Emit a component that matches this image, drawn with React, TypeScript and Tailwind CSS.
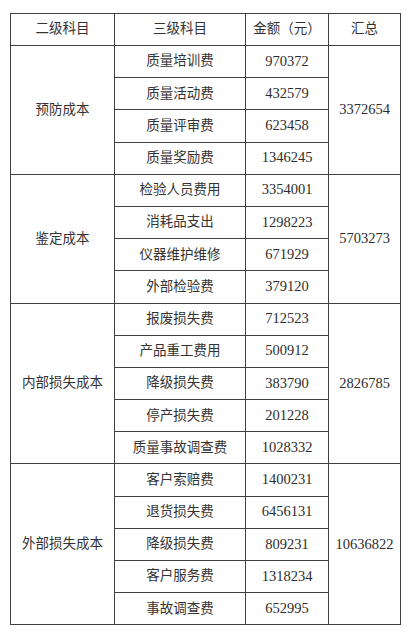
import React from 'react';

type Group = {
  name: string;
  total: string;
  items: [string, string][];
};

const groups: Group[] = [
  {
    name: '预防成本',
    total: '3372654',
    items: [
      ['质量培训费', '970372'],
      ['质量活动费', '432579'],
      ['质量评审费', '623458'],
      ['质量奖励费', '1346245'],
    ],
  },
  {
    name: '鉴定成本',
    total: '5703273',
    items: [
      ['检验人员费用', '3354001'],
      ['消耗品支出', '1298223'],
      ['仪器维护维修', '671929'],
      ['外部检验费', '379120'],
    ],
  },
  {
    name: '内部损失成本',
    total: '2826785',
    items: [
      ['报废损失费', '712523'],
      ['产品重工费用', '500912'],
      ['降级损失费', '383790'],
      ['停产损失费', '201228'],
      ['质量事故调查费', '1028332'],
    ],
  },
  {
    name: '外部损失成本',
    total: '10636822',
    items: [
      ['客户索赔费', '1400231'],
      ['退货损失费', '6456131'],
      ['降级损失费', '809231'],
      ['客户服务费', '1318234'],
      ['事故调查费', '652995'],
    ],
  },
];

const cell = 'border border-[#404040] text-center align-middle p-0';
const cjk = 'text-[13.5px] text-[#333]';
const num = 'text-[14.5px] text-[#2e2e2e]';

export default function App() {
  return (
    <div
      className="min-h-[633px] w-[406px] bg-white pl-[10px] pt-[13px]"
      style={{ fontFamily: '"Liberation Serif", "Noto Sans CJK SC", serif' }}
    >
      <table className="table-fixed border-collapse w-[390px]">
        <colgroup>
          <col className="w-[104px]" />
          <col className="w-[131px]" />
          <col className="w-[83px]" />
          <col className="w-[72px]" />
        </colgroup>
        <thead>
          <tr className="h-[32px]">
            <th className={`${cell} ${cjk} font-normal`}>二级科目</th>
            <th className={`${cell} ${cjk} font-normal`}>三级科目</th>
            <th className={`${cell} ${cjk} font-normal`}>金额（元）</th>
            <th className={`${cell} ${cjk} font-normal`}>汇总</th>
          </tr>
        </thead>
        <tbody>
          {groups.map((g) =>
            g.items.map(([label, amount], i) => (
              <tr key={g.name + label} className="h-[32.2px]">
                {i === 0 && (
                  <td rowSpan={g.items.length} className={`${cell} ${cjk}`}>
                    {g.name}
                  </td>
                )}
                <td className={`${cell} ${cjk}`}>{label}</td>
                <td className={`${cell} ${num}`}>{amount}</td>
                {i === 0 && (
                  <td rowSpan={g.items.length} className={`${cell} ${num}`}>
                    {g.total}
                  </td>
                )}
              </tr>
            ))
          )}
        </tbody>
      </table>
    </div>
  );
}
